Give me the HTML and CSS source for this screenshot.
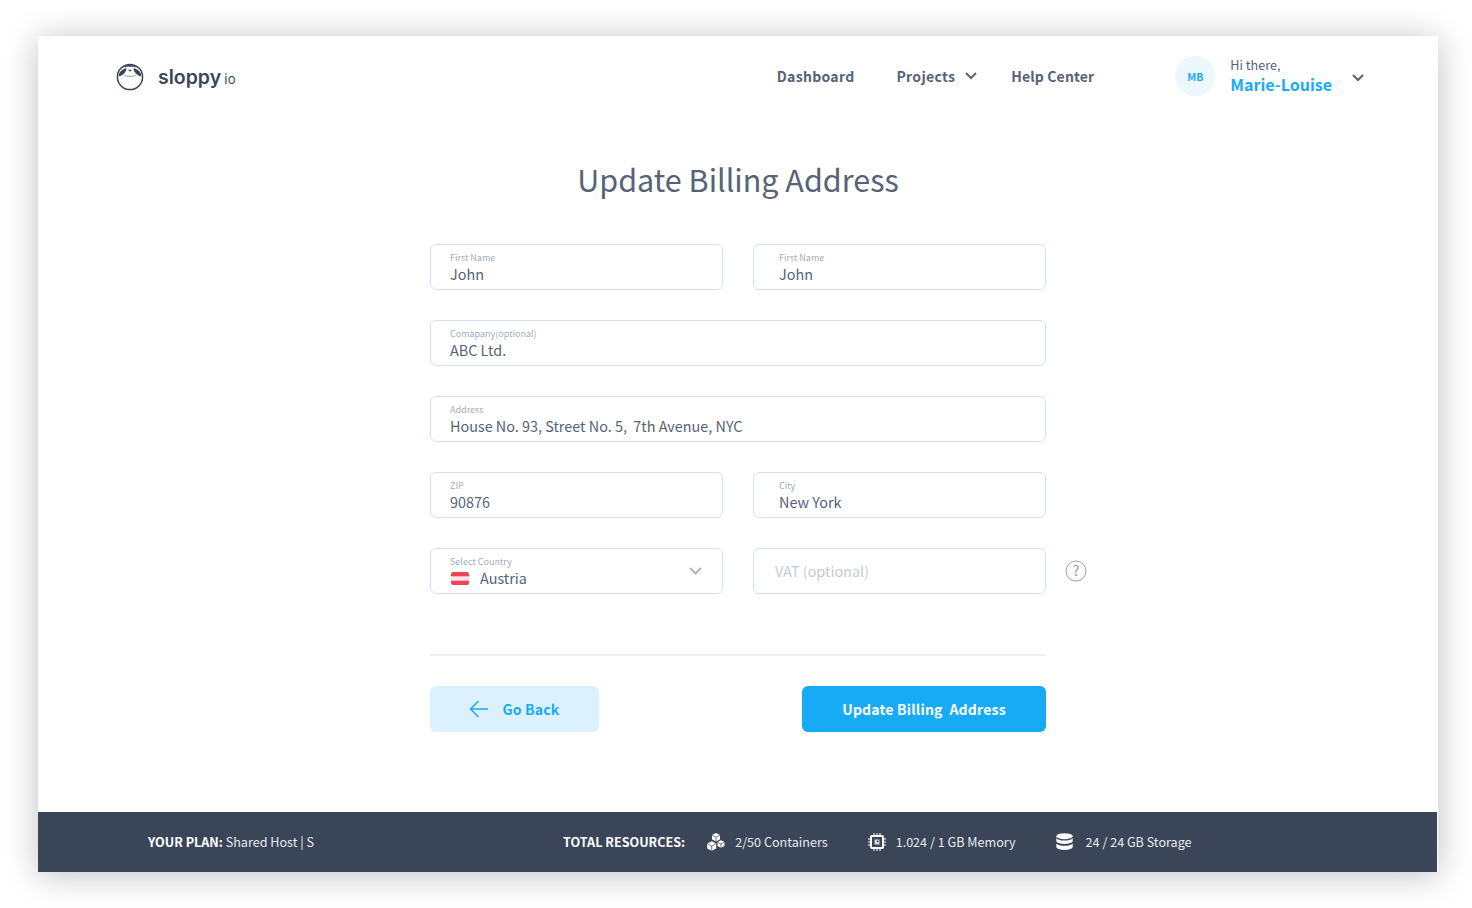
FILE: index.html
```html
<!DOCTYPE html>
<html lang="en">
<head>
    <meta charset="UTF-8">
    <title>Update Billing Address</title>
    <link rel="stylesheet" href="styles.css">
</head>
<body>
    <div class="window">
        <header class="header">
            <div class="logo">
                <svg class="logo-mark" width="30" height="30" viewBox="0 0 30 30">
                    <circle cx="15" cy="16" r="12.600" fill="none" stroke="#3b4558" stroke-width="1.500"/>
                    <path d="M8 6.500C10 3 20 3 22 6.500 19.500 5.500 10.500 5.500 8 6.500z" fill="#3b4558"/>
                    <path d="M3.500 15.500C4 11 7 8 11.500 7.300 11.500 11 8 14.800 3.500 15.500z" fill="#3b4558"/>
                    <path d="M26.500 15.500C26 11 23 8 18.500 7.300 18.500 11 22 14.800 26.500 15.500z" fill="#3b4558"/>
                    <path d="M13 8.800h4l-2 2z" fill="#3b4558"/>
                    <path d="M9.500 14.500c3 1.200 8 1.200 11 0" fill="none" stroke="#9aa3b0" stroke-width="1"/>
                </svg>
                <span class="logo-name">sloppy</span>
                <span class="logo-tld">io</span>
            </div>
            <nav class="nav">
                <a class="nav-link nav-dashboard">Dashboard</a>
                <a class="nav-link nav-projects">Projects
                    <svg class="chev" width="12" height="8" viewBox="0 0 12 8"><path d="M1 1l5 5 5-5" fill="none" stroke="#566376" stroke-width="2"/></svg>
                </a>
                <a class="nav-link nav-help">Help Center</a>
            </nav>
            <div class="user">
                <div class="avatar">MB</div>
                <div class="user-text">
                    <div class="user-hi">Hi there,</div>
                    <div class="user-name">Marie-Louise</div>
                </div>
                <svg class="chev user-chev" width="12" height="8" viewBox="0 0 12 8"><path d="M1 1l5 5 5-5" fill="none" stroke="#566376" stroke-width="2"/></svg>
            </div>
        </header>

        <main class="main">
            <h1 class="title">Update Billing Address</h1>
            <form class="form">
                <div class="field">
                    <label>First Name</label>
                    <div class="value">John</div>
                </div>
                <div class="field field-right">
                    <label>First Name</label>
                    <div class="value">John</div>
                </div>
                <div class="field wide">
                    <label>Comapany(optional)</label>
                    <div class="value">ABC Ltd.</div>
                </div>
                <div class="field wide">
                    <label>Address</label>
                    <div class="value">House No. 93, Street No. 5,&nbsp; 7th Avenue, NYC</div>
                </div>
                <div class="field">
                    <label>ZIP</label>
                    <div class="value">90876</div>
                </div>
                <div class="field field-right">
                    <label>City</label>
                    <div class="value">New York</div>
                </div>
                <div class="field">
                    <label>Select Country</label>
                    <div class="value country">
                        <svg class="flag" width="18" height="13" viewBox="0 0 18 13">
                            <rect width="18" height="13" rx="2" fill="#ee4453"/>
                            <rect y="4.300" width="18" height="4.400" fill="#f8e6e9"/>
                        </svg>
                        Austria
                    </div>
                    <svg class="select-chev" width="13" height="8" viewBox="0 0 13 8"><path d="M1 1l5.500 5.500L12 1" fill="none" stroke="#a9b3c1" stroke-width="2"/></svg>
                </div>
                <div class="field field-empty">
                    <div class="placeholder">VAT (optional)</div>
                    <svg class="help" width="22" height="22" viewBox="0 0 22 22">
                        <circle cx="11" cy="11" r="10" fill="none" stroke="#9aa4b3" stroke-width="1"/>
                        <text x="11" y="15.500" text-anchor="middle" class="help-mark">?</text>
                    </svg>
                </div>
            </form>
            <div class="actions">
                <a class="btn btn-back">
                    <svg width="20" height="18" viewBox="0 0 20 18"><path d="M19 9H2M9.500 1L1.500 9l8 8" fill="none" stroke="#17abf6" stroke-width="1.500"/></svg>
                    Go Back
                </a>
                <a class="btn btn-primary">Update Billing&nbsp; Address</a>
            </div>
        </main>

        <footer class="footer">
            <div class="plan"><b>YOUR PLAN:</b> Shared Host | S</div>
            <b class="total">TOTAL RESOURCES:</b>
            <div class="res res-containers">
                <svg width="18" height="18" viewBox="0 0 18 18" fill="#fff">
                    <path d="M9 0l4 2v4.300L9 8.400 5 6.300V2z"/>
                    <path d="M4.700 8.200l4.500 2.400v4.800l-4.500 2.400-4.500-2.400v-4.800z"/>
                    <path d="M14 7.300l3.500 1.800v3.800L14 14.700l-3.500-1.800V9.100z"/>
                    <path d="M5 2.200l4 2 4-2M9 4.200v4.200M.2 10.600L4.700 13l4.500-2.400M4.700 13v4.800M10.500 9.100L14 11l3.500-1.900M14 11v3.700" fill="none" stroke="#3b4558" stroke-width=".7"/>
                </svg>
                <span>2/50 Containers</span>
            </div>
            <div class="res res-memory">
                <svg width="18" height="18" viewBox="0 0 18 18">
                    <rect x="3" y="3" width="12" height="12" rx="1" fill="none" stroke="#fff" stroke-width="2"/>
                    <rect x="6.500" y="6.500" width="5" height="5" fill="#d5d9df"/>
                    <rect x="9" y="7.500" width="1.500" height="1.500" fill="#3b4558"/>
                    <path d="M6 0v3M9 0v3M12 0v3M6 15v3M9 15v3M12 15v3M0 6h3M0 9h3M0 12h3M15 6h3M15 9h3M15 12h3" stroke="#fff" stroke-width="1"/>
                </svg>
                <span>1.024 / 1 GB Memory</span>
            </div>
            <div class="res res-storage">
                <svg width="17" height="18" viewBox="0 0 17 18" fill="#fff">
                    <ellipse cx="8.500" cy="3.200" rx="8.200" ry="3"/>
                    <path d="M.3 5.200c1.300 1.600 4.500 2.300 8.200 2.300s6.900-.7 8.200-2.300v3.300c-1 1.600-4.500 2.500-8.200 2.500S1.300 10.100.3 8.500z"/>
                    <path d="M.3 10.500c1.300 1.500 4.500 2.300 8.200 2.300s6.900-.8 8.200-2.300v3.800c-1 1.800-4.500 2.800-8.200 2.800S1.300 16.100.3 14.300z"/>
                </svg>
                <span>24 / 24 GB Storage</span>
            </div>
        </footer>
    </div>
</body>
</html>
```

FILE: styles.css
```css
* {
    box-sizing: border-box;
}
body {
    margin: 0;
    padding: 36px 34px 36px 38px;
    background: #fff;
    font-family: "Noto Sans CJK SC", "Noto Sans", sans-serif;
    color: #566376;
}
.window {
    height: 836px;
    background: #fff;
    display: flex;
    flex-direction: column;
    box-shadow: 0 3px 32px rgba(0, 0, 0, 0.25);
}

/* header */
.header {
    height: 80px;
    padding: 0 74px 0 77px;
    display: flex;
    align-items: center;
    flex-shrink: 0;
}
.logo {
    display: flex;
    align-items: center;
    color: #3b4558;
}
.logo-name {
    margin-left: 13px;
    margin-top: 2px;
    font-family: "Inter", sans-serif;
    font-size: 19.500px;
    font-weight: 600;
}
.logo-tld {
    margin-left: 3px;
    margin-top: 6px;
    font-family: "Inter", sans-serif;
    font-size: 13px;
    letter-spacing: 0.5px;
}
.nav {
    margin-left: auto;
    display: flex;
    align-items: center;
    font-size: 14px;
    font-weight: 700;
    letter-spacing: 0.3px;
}
.nav-link {
    display: flex;
    align-items: center;
}
.nav-dashboard {
    margin-right: 42px;
}
.nav-projects {
    margin-right: 34px;
}
.nav-projects .chev {
    margin-left: 10px;
}
.nav-help {
    letter-spacing: 0.15px;
}
.user {
    margin-left: 81px;
    display: flex;
    align-items: center;
}
.avatar {
    width: 40px;
    height: 40px;
    border-radius: 50%;
    background: #edf7fe;
    color: #17abf6;
    font-size: 10.500px;
    font-weight: 700;
    display: flex;
    align-items: center;
    justify-content: center;
}
.user-text {
    margin-left: 15px;
    margin-top: -3px;
}
.user-hi {
    font-size: 12.600px;
    line-height: 18px;
}
.user-name {
    font-size: 16px;
    font-weight: 700;
    line-height: 20px;
    color: #17abf6;
}
.user-chev {
    margin-left: 20px;
    margin-top: 3px;
}

/* form */
.main {
    flex: 1;
    width: 616px;
    margin: 0 auto;
}
.title {
    margin: 40px 0 0;
    font-size: 30.500px;
    font-weight: 400;
    line-height: 46px;
    text-align: center;
    white-space: nowrap;
}
.form {
    margin-top: 42px;
    display: grid;
    grid-template-columns: 1fr 1fr;
    gap: 30px;
}
.field {
    position: relative;
    height: 46px;
    padding: 7px 19px 0;
    border: 1px solid #d3e2ec;
    border-radius: 6px;
}
.field-right {
    padding-left: 25px;
}
.wide {
    grid-column: span 2;
}
.field label {
    display: block;
    font-size: 9px;
    line-height: 12px;
    color: #a3adbb;
}
.value {
    font-size: 14.400px;
    line-height: 20px;
    white-space: nowrap;
}
.country {
    display: flex;
    align-items: center;
}
.flag {
    margin-left: 1px;
    margin-right: 11px;
}
.select-chev {
    position: absolute;
    right: 20px;
    top: 18px;
}
.field-empty {
    padding: 0 20px 2px 21px;
    display: flex;
    align-items: center;
}
.placeholder {
    font-size: 14.400px;
    color: #c2ccd6;
}
.help {
    position: absolute;
    left: 311px;
    top: 11px;
}
.help-mark {
    font-size: 14px;
    fill: #8f99a9;
}
.actions {
    margin-top: 60px;
    padding-top: 30px;
    border-top: 2px solid #eaf0f3;
    display: flex;
    justify-content: space-between;
}
.btn {
    height: 46px;
    border-radius: 6px;
    font-size: 14px;
    font-weight: 700;
    letter-spacing: 0.2px;
    display: flex;
    align-items: center;
    justify-content: center;
}
.btn-back {
    width: 169px;
    background: #dbf1fd;
    color: #17abf6;
}
.btn-back svg {
    margin-right: 13px;
}
.btn-primary {
    width: 244px;
    background: #17abf6;
    color: #fff;
}

/* footer */
.footer {
    height: 60px;
    flex-shrink: 0;
    margin-right: 1px;
    padding: 0 0 2px 110px;
    background: #3b4558;
    color: #e8ebef;
    font-size: 12.600px;
    display: flex;
    align-items: center;
    white-space: nowrap;
}
.footer b {
    color: #fff;
    font-weight: 700;
}
.plan {
    width: 415px;
}
.res {
    display: flex;
    align-items: center;
}
.res svg {
    margin-top: 2px;
}
.res-containers {
    margin-left: 22px;
}
.res-containers svg {
    margin-right: 10px;
}
.res-memory {
    margin-left: 40px;
}
.res-memory svg {
    margin-right: 10px;
}
.res-storage {
    margin-left: 40px;
}
.res-storage svg {
    margin-right: 13px;
}
```
